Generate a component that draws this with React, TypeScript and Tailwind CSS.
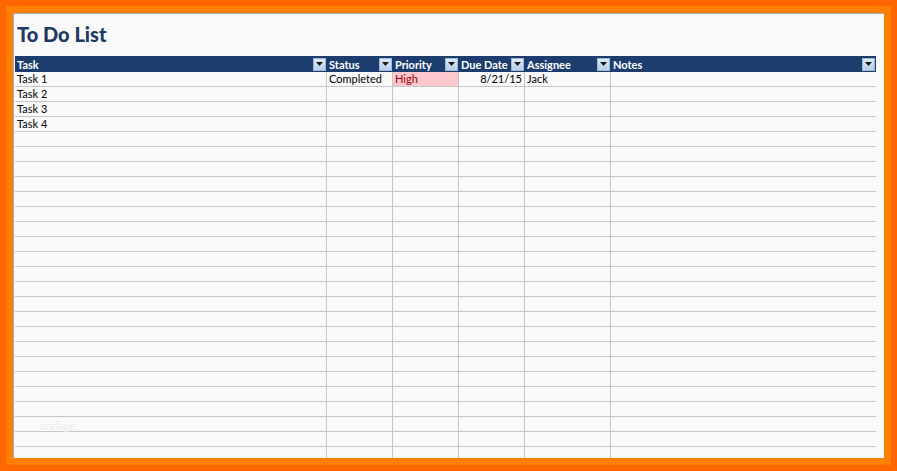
import React from "react";

const cols = [
  { name: "Task", w: "w-[312px]" },
  { name: "Status", w: "w-[66px]" },
  { name: "Priority", w: "w-[66px]" },
  { name: "Due Date", w: "w-[66px]" },
  { name: "Assignee", w: "w-[86px]" },
  { name: "Notes", w: "w-[265px]" },
];

const data: string[][] = [
  ["Task 1", "Completed", "High", "8/21/15", "Jack", ""],
  ["Task 2", "", "", "", "", ""],
  ["Task 3", "", "", "", "", ""],
  ["Task 4", "", "", "", "", ""],
];

function DropBtn() {
  return (
    <div className="w-[13px] h-[13px] shrink-0 border border-[#9fb7d6] bg-gradient-to-b from-[#dfeaf7] to-[#b9cfe9] flex items-center justify-center">
      <svg width="7" height="4" viewBox="0 0 7 4">
        <polygon points="0,0 7,0 3.5,4" fill="#1a1a1a" />
      </svg>
    </div>
  );
}

export default function App() {
  const rows = Array.from({ length: 26 }, (_, i) => data[i] ?? ["", "", "", "", "", ""]);
  return (
    <div
      className="w-[897px] h-[471px] bg-[#ff6600] p-[6px]"
      style={{ fontFamily: "Lato, 'Open Sans', sans-serif" }}
    >
      <div className="h-full bg-[#ff8000] p-[7px]">
        <div className="h-full bg-[#fafafa] border-t border-l border-[#a9a9a9] overflow-hidden relative pl-px">
          <div className="h-[42px] flex items-end pb-[12px] pl-[2px]">
            <span className="text-[20px] leading-none font-black text-[#1f3864]">To Do List</span>
          </div>
          <div className="flex h-[16px] bg-[#1d3d6f] w-[861px]">
            {cols.map((c, i) => (
              <div
                key={i}
                className={`${c.w} shrink-0 flex items-center justify-between pl-[2px] pr-px`}
              >
                <span className="text-[11px] font-bold text-white leading-none">{c.name}</span>
                <DropBtn />
              </div>
            ))}
          </div>
          {rows.map((r, ri) => (
            <div key={ri} className="flex h-[15px] w-[861px] border-b border-[#c6c6c6]">
              {cols.map((c, ci) => {
                const v = r[ci];
                const isHigh = v === "High";
                const isDate = ci === 3;
                return (
                  <div
                    key={ci}
                    className={`${c.w} shrink-0 h-full text-[11px] leading-[14px] overflow-hidden whitespace-nowrap ${
                      ci < 5 ? "border-r border-[#c6c6c6]" : ""
                    } ${isHigh ? "bg-[#ffc7ce] text-[#9c0006]" : "text-black"} ${
                      isDate ? "text-right pr-[2px]" : "pl-[2px]"
                    }`}
                  >
                    {v}
                  </div>
                );
              })}
            </div>
          ))}
          <div className="absolute left-[26px] top-[404px] text-[11px] text-[#ececec]">vorlage</div>
        </div>
      </div>
    </div>
  );
}
